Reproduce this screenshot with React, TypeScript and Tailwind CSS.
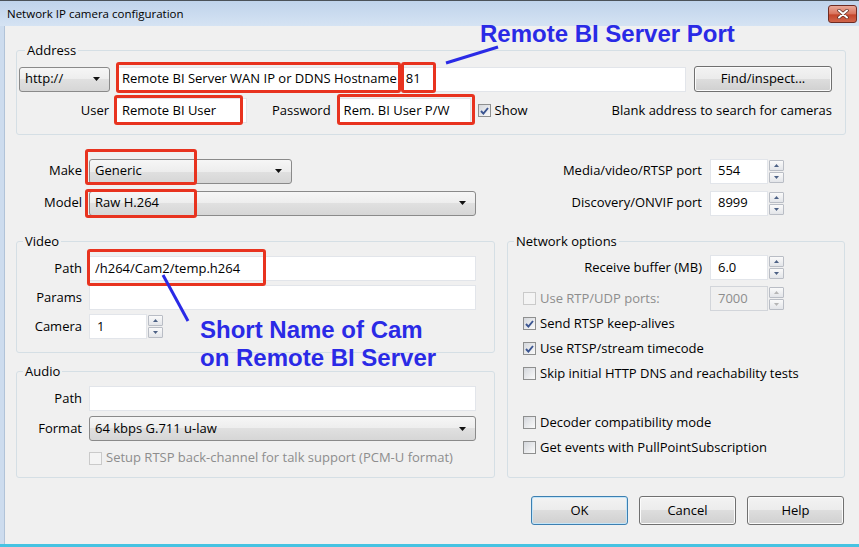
import React from 'react';

function Arrow() {
  return (
    <svg width="7" height="4" viewBox="0 0 7 4">
      <path d="M0 0h7L3.5 4z" fill="#111" />
    </svg>
  );
}

function Combo({ value, className }: { value: string; className: string }) {
  return (
    <div
      className={`h-[25px] flex items-center justify-between pl-[5px] pr-[9px] rounded-[3px] border border-[#8a8a8a] bg-[linear-gradient(#f6f6f6_0%,#ededed_50%,#e0e0e0_50%,#d6d6d6_100%)] ${className}`}
    >
      <span>{value}</span>
      <Arrow />
    </div>
  );
}

function TextBox({ children, className }: { children?: React.ReactNode; className: string }) {
  return (
    <div className={`h-[25px] bg-white border border-[#e2e5ea] flex items-center pl-[5px] whitespace-nowrap overflow-hidden ${className}`}>
      {children}
    </div>
  );
}

function SpinBtn({ up, disabled }: { up?: boolean; disabled?: boolean }) {
  return (
    <div className="h-[11px] border border-[#b9bdc5] rounded-[1px] bg-[linear-gradient(#fafafa,#e3e5e9)] flex items-center justify-center">
      <svg width="5" height="3" viewBox="0 0 5 3">
        <path d={up ? 'M0 3h5L2.5 0z' : 'M0 0h5L2.5 3z'} fill={disabled ? '#b5b5b5' : '#4d6185'} />
      </svg>
    </div>
  );
}

function Spin({ value, disabled }: { value: string; disabled?: boolean }) {
  return (
    <div className="flex h-[25px]">
      <div
        className={`w-[58px] border flex items-center pl-[7px] ${
          disabled ? 'bg-[#f0f0f0] border-[#d2d5da] text-[#8d8d8d]' : 'bg-white border-[#e2e5ea]'
        }`}
      >
        {value}
      </div>
      <div className="w-[16px] flex flex-col justify-center gap-[1px] pl-[1px]">
        <SpinBtn up disabled={disabled} />
        <SpinBtn disabled={disabled} />
      </div>
    </div>
  );
}

function Check({ checked, disabled }: { checked?: boolean; disabled?: boolean }) {
  return (
    <span
      className={`w-[13px] h-[13px] shrink-0 border flex items-center justify-center ${
        disabled
          ? 'border-[#cacaca] bg-[#f4f4f4]'
          : 'border-[#8e8f8f] bg-[linear-gradient(135deg,#d4d7dc,#fafafa)]'
      }`}
    >
      {checked && (
        <svg width="9" height="8" viewBox="0 0 9 8">
          <path d="M1 4l2.4 2.6L8 1" fill="none" stroke="#3b5591" strokeWidth="1.9" />
        </svg>
      )}
    </span>
  );
}

function CheckRow({ label, checked, disabled }: { label: string; checked?: boolean; disabled?: boolean }) {
  return (
    <div className={`h-[25px] flex items-center gap-[4px] pl-[15px] ${disabled ? 'text-[#8d8d8d]' : ''}`}>
      <Check checked={checked} disabled={disabled} />
      <span>{label}</span>
    </div>
  );
}

function Btn({ children, def }: { children: React.ReactNode; def?: boolean }) {
  return (
    <button
      type="button"
      className={`w-[97px] h-[29px] rounded-[3px] border flex items-center justify-center bg-[linear-gradient(#f3f3f3_0%,#ebebeb_50%,#dddddd_50%,#d0d0d0_100%)] ${
        def ? 'border-[#3c7fb1] shadow-[inset_0_0_0_1px_#c4e5f8]' : 'border-[#707070] shadow-[inset_0_0_0_1px_#fbfbfb]'
      }`}
    >
      {children}
    </button>
  );
}

const legend = 'ml-[6px] px-[2px] leading-[16px]';
const group = 'border border-[#d5dfe5] rounded-[3px]';

export default function App() {
  return (
    <div className="relative w-[859px] h-[547px] overflow-hidden bg-[#cddcee] font-['Open_Sans',sans-serif] text-[13px] text-black">
      {/* Title bar */}
      <div className="h-[26px] border-t border-[#4b5259] bg-gradient-to-b from-[#bfd3eb] to-[#d5e3f3] flex items-start">
        <span className="pl-[7px] pt-[4px] text-[11.5px]">Network IP camera configuration</span>
        <div className="ml-auto mr-[2px] mt-[4px] w-[29px] h-[18px] rounded-[3px] border border-[#6e2b22] bg-[linear-gradient(#e9a999_0%,#d9735c_50%,#c4452b_55%,#d0654b_100%)] flex items-center justify-center">
          <svg width="12" height="10" viewBox="0 0 12 10">
            <path d="M2 1.5l8 7M10 1.5l-8 7" stroke="#5a2a22" strokeWidth="3.4" strokeLinecap="round" />
            <path d="M2 1.5l8 7M10 1.5l-8 7" stroke="#fff" strokeWidth="2" strokeLinecap="round" />
          </svg>
        </div>
      </div>

      {/* Client */}
      <div className="flex h-[518px]">
        <div className="w-[5px] border-r border-[#b1c3d8]" />
        <div className="flex-1 bg-[#f0f0f0] flex flex-col pl-[11px] pr-[13px]">
          {/* Address */}
          <fieldset className={`${group} mt-[16px] pl-[2px] pr-[12px] pb-[11px]`}>
            <legend className={legend}>Address</legend>
            <div className="flex items-center mt-[8px]">
              <Combo value="http://" className="w-[91px]" />
              <TextBox className="w-[570px] ml-[6px]">
                Remote BI Server WAN IP or DDNS Hostname
                <span className="ml-[9px]">81</span>
              </TextBox>
              <button
                type="button"
                className="ml-[8px] w-[138px] h-[26px] rounded-[3px] border border-[#707070] shadow-[inset_0_0_0_1px_#fbfbfb] bg-[linear-gradient(#f3f3f3_0%,#ebebeb_50%,#dddddd_50%,#d0d0d0_100%)]"
              >
                Find/inspect...
              </button>
            </div>
            <div className="flex items-center mt-[6px]">
              <span className="w-[91px] text-right pr-[1px]">User</span>
              <TextBox className="w-[131px] ml-[6px]">Remote BI User</TextBox>
              <span className="ml-[25px]">Password</span>
              <TextBox className="w-[133px] ml-[7px]">Rem. BI User P/W</TextBox>
              <span className="ml-[7px] flex items-center gap-[4px]">
                <Check checked />
                Show
              </span>
              <span className="ml-auto mr-[1px]">Blank address to search for cameras</span>
            </div>
          </fieldset>

          {/* Make / Model / ports */}
          <div className="flex items-center h-[26px] mt-[23px]">
            <span className="w-[66px] text-right">Make</span>
            <Combo value="Generic" className="w-[203px] ml-[7px]" />
            <div className="ml-auto mr-[62px] flex items-center gap-[8px]">
              <span>Media/video/RTSP port</span>
              <Spin value="554" />
            </div>
          </div>
          <div className="flex items-center h-[26px] mt-[6px]">
            <span className="w-[66px] text-right">Model</span>
            <Combo value="Raw H.264" className="w-[387px] ml-[7px]" />
            <div className="ml-auto mr-[62px] flex items-center gap-[8px]">
              <span>Discovery/ONVIF port</span>
              <Spin value="8999" />
            </div>
          </div>

          {/* Groups */}
          <div className="flex gap-[12px] mt-[17px]">
            <div className="w-[479px] flex flex-col">
              <fieldset className={`${group} pb-[13px]`}>
                <legend className={legend}>Video</legend>
                <div className="flex items-center mt-[7px]">
                  <span className="w-[65px] text-right">Path</span>
                  <TextBox className="w-[387px] ml-[7px]">/h264/Cam2/temp.h264</TextBox>
                </div>
                <div className="flex items-center mt-[4px]">
                  <span className="w-[65px] text-right">Params</span>
                  <TextBox className="w-[387px] ml-[7px]" />
                </div>
                <div className="flex items-center mt-[4px]">
                  <span className="w-[65px] text-right">Camera</span>
                  <div className="ml-[7px]">
                    <Spin value="1" />
                  </div>
                </div>
              </fieldset>

              <fieldset className={`${group} mt-[10px] pb-[12px]`}>
                <legend className={legend}>Audio</legend>
                <div className="flex items-center mt-[7px]">
                  <span className="w-[65px] text-right">Path</span>
                  <TextBox className="w-[387px] ml-[7px]" />
                </div>
                <div className="flex items-center mt-[5px]">
                  <span className="w-[65px] text-right">Format</span>
                  <Combo value="64 kbps G.711 u-law" className="w-[387px] ml-[7px]" />
                </div>
                <div className="flex items-center gap-[4px] mt-[10px] ml-[72px] h-[14px] text-[#8d8d8d]">
                  <Check disabled />
                  <span>Setup RTSP back-channel for talk support (PCM-U format)</span>
                </div>
              </fieldset>
            </div>

            <fieldset className={`${group} w-[338px] flex flex-col`}>
              <legend className={legend}>Network options</legend>
              <div className="flex items-center justify-end gap-[8px] mr-[60px] mt-[6px]">
                <span>Receive buffer (MB)</span>
                <Spin value="6.0" />
              </div>
              <div className="flex items-center justify-between mr-[60px] mt-[6px]">
                <div className="flex items-center gap-[4px] pl-[15px] text-[#8d8d8d]">
                  <Check disabled />
                  <span>Use RTP/UDP ports:</span>
                </div>
                <Spin value="7000" disabled />
              </div>
              <CheckRow label="Send RTSP keep-alives" checked />
              <CheckRow label="Use RTSP/stream timecode" checked />
              <CheckRow label="Skip initial HTTP DNS and reachability tests" />
              <div className="h-[24px]" />
              <CheckRow label="Decoder compatibility mode" />
              <CheckRow label="Get events with PullPointSubscription" />
            </fieldset>
          </div>

          {/* Buttons */}
          <div className="flex justify-end gap-[11px] mt-[18px] pr-[2px]">
            <Btn def>OK</Btn>
            <Btn>Cancel</Btn>
            <Btn>Help</Btn>
          </div>
        </div>
      </div>
      <div className="h-[3px] bg-[#46c3e2]" />

      {/* Annotations */}
      <div className="absolute left-[116px] top-[62px] w-[285px] h-[31px] border-[3px] border-[#e8331f] rounded-[3px]" />
      <div className="absolute left-[401px] top-[62px] w-[35px] h-[31px] border-[3px] border-[#e8331f] rounded-[3px]" />
      <div className="absolute left-[114px] top-[95px] w-[129px] h-[30px] border-[3px] border-[#e8331f] rounded-[3px]" />
      <div className="absolute left-[337px] top-[94px] w-[138px] h-[31px] border-[3px] border-[#e8331f] rounded-[3px]" />
      <div className="absolute left-[85px] top-[149px] w-[112px] h-[36px] border-[3px] border-[#e8331f] rounded-[3px]" />
      <div className="absolute left-[85px] top-[189px] w-[112px] h-[29px] border-[3px] border-[#e8331f] rounded-[3px]" />
      <div className="absolute left-[87px] top-[249px] w-[179px] h-[37px] border-[3px] border-[#e8331f] rounded-[3px]" />

      <svg className="absolute inset-0 pointer-events-none" width="859" height="547">
        <line x1="446" y1="63" x2="498" y2="47" stroke="#2a2ae6" strokeWidth="3" />
        <line x1="163" y1="275" x2="188" y2="321" stroke="#2a2ae6" strokeWidth="3" />
      </svg>

      <div className="absolute left-[480px] top-[20px] font-['Liberation_Sans',Arial,sans-serif] font-bold text-[24px] leading-[28px] text-[#2a2ae6]">
        Remote BI Server Port
      </div>
      <div className="absolute left-[200px] top-[316px] font-['Liberation_Sans',Arial,sans-serif] font-bold text-[24px] leading-[28px] text-[#2a2ae6]">
        Short Name of Cam
        <br />
        on Remote BI Server
      </div>
    </div>
  );
}
